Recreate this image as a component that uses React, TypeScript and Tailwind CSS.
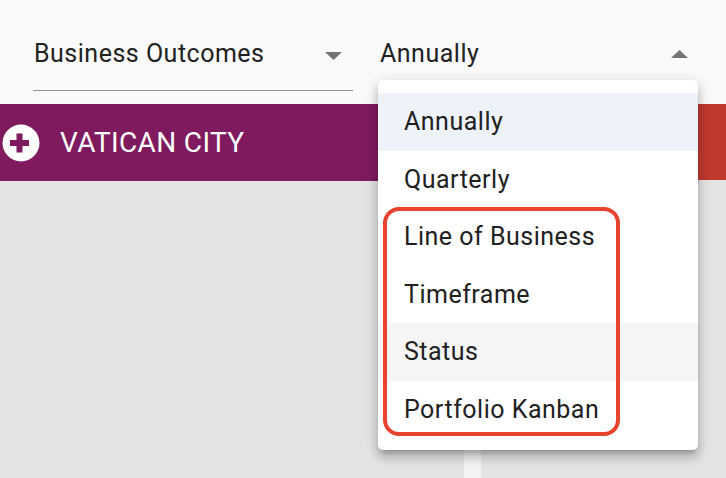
import React from "react";

const items = ["Annually", "Quarterly", "Line of Business", "Timeframe", "Status", "Portfolio Kanban"];

function Caret({ up }: { up?: boolean }) {
  return (
    <svg width="17" height="8" viewBox="0 0 17 8" className="block">
      {up ? <path d="M0 8 L8.5 0 L17 8 Z" fill="#757575" /> : <path d="M0 0 L17 0 L8.5 8 Z" fill="#757575" />}
    </svg>
  );
}

function PlusCircle() {
  return (
    <svg width="38" height="38" viewBox="0 0 38 38" className="block">
      <circle cx="19" cy="19" r="18.5" fill="#ffffff" />
      <rect x="8" y="16" width="19" height="6" fill="#7f1a5f" />
      <rect x="14.5" y="9.5" width="6" height="19" fill="#7f1a5f" />
    </svg>
  );
}

export default function App() {
  return (
    <div
      className="relative w-[726px] h-[478px] overflow-hidden bg-[#e4e4e4] text-[#212121]"
      style={{ fontFamily: "Roboto, 'Noto Sans', sans-serif" }}
    >
      {/* header with selects */}
      <div className="flex h-[104px] bg-[#fafafa] pl-[33px]">
        <div className="relative w-[320px] h-[91px] pt-[40px] pl-[1px] border-b border-[#949494]">
          <div className="text-[25px] leading-[28px] tracking-[0.5px]">Business Outcomes</div>
          <div className="absolute right-[11px] top-[52px]">
            <Caret />
          </div>
        </div>
        <div className="relative ml-[25px] w-[320px] h-[91px] pt-[40px] pl-[2px]">
          <div className="text-[25px] leading-[28px] tracking-[0.5px]">Annually</div>
          <div className="absolute right-[10px] top-[50px]">
            <Caret up />
          </div>
        </div>
      </div>

      {/* board */}
      <div className="flex h-[374px]">
        <div className="w-[464px]">
          <div className="flex items-center h-[77px] bg-[#7f1a5f] pl-[2px] gap-[20px]">
            <PlusCircle />
            <span className="text-white text-[28px] leading-none tracking-[0.35px]">VATICAN CITY</span>
          </div>
        </div>
        <div className="w-[17px] bg-[#f3f3f3]" />
        <div className="flex-1">
          <div className="h-[76px] bg-[#c0392f]" />
        </div>
      </div>

      {/* open menu */}
      <div className="absolute left-[378px] top-[80px] w-[320px] h-[370px] bg-white rounded-[5px] py-[13px] shadow-[0_5px_5px_-3px_rgba(0,0,0,0.2),0_8px_10px_1px_rgba(0,0,0,0.14),0_3px_14px_2px_rgba(0,0,0,0.12)]">
        {items.map((it, i) => (
          <div
            key={it}
            className={`flex items-center h-[57.5px] pl-[26px] text-[25px] tracking-[0.5px] ${
              i === 0 ? "bg-[#eef3fa]" : i === 4 ? "bg-[#f5f5f5]" : ""
            }`}
          >
            {it}
          </div>
        ))}
        <div className="absolute left-[5px] top-[127px] w-[237px] h-[229px] border-[4px] border-[#e8432e] rounded-[16px]" />
      </div>
    </div>
  );
}
